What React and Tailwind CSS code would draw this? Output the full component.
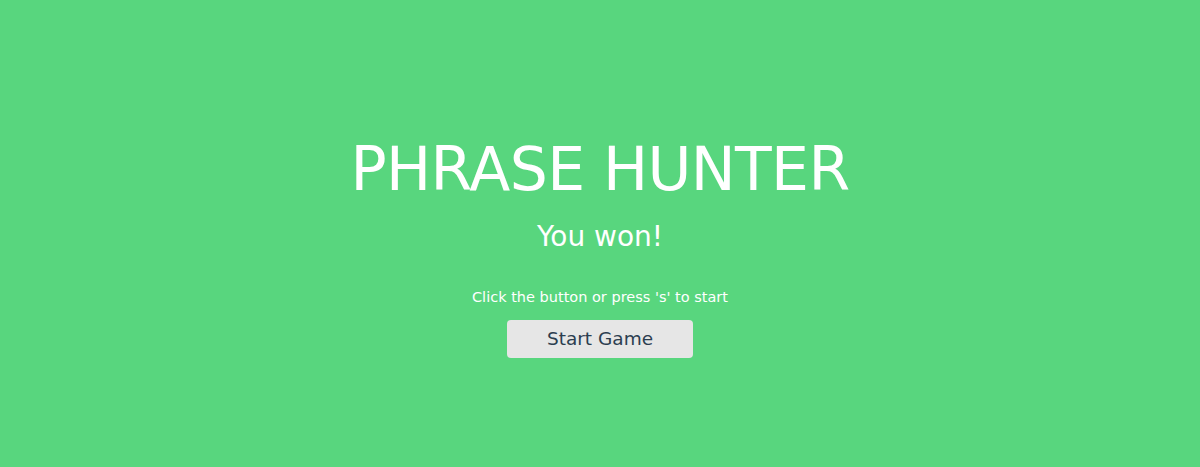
export default function App() {
  return (
    <div className="min-h-[467px] w-full bg-[#58d67e] flex flex-col items-center text-white font-['DejaVu_Sans',sans-serif]">
      <h1 className="mt-[133px] text-[60px] leading-[72px] font-normal tracking-[-0.6px]">PHRASE HUNTER</h1>
      <h2 className="mt-[15px] text-[28px] leading-[34px]">You won!</h2>
      <p className="mt-[34px] text-[14.5px] leading-[18px]">Click the button or press 's' to start</p>
      <button className="mt-[14px] w-[186px] h-[38px] rounded-[4px] bg-[#e6e6e6] text-[#2c3e50] text-[18.5px]">
        Start Game
      </button>
    </div>
  );
}
